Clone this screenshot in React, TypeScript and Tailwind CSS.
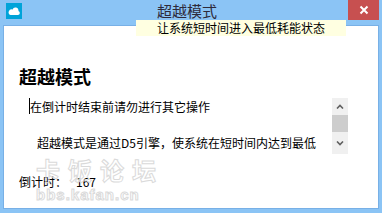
import React from 'react';

const AppIcon: React.FC = () => (
  <div className="w-4 h-4 bg-[#00a3d9] flex items-center justify-center">
    <svg width="12" height="8" viewBox="0 0 12 8">
      <path d="M2.5 8 H10 a2 2 0 0 0 0.4 -3.9 A3 3 0 0 0 4.6 2.6 A2.2 2.2 0 0 0 2.5 8 Z" fill="#ffffff" />
    </svg>
  </div>
);

const Chevron: React.FC<{ up?: boolean }> = ({ up }) => (
  <svg width="8" height="5" viewBox="0 0 8 5">
    <path d={up ? 'M1 4.5 L4 1.5 L7 4.5' : 'M1 0.5 L4 3.5 L7 0.5'} stroke="#606060" strokeWidth="1.6" fill="none" />
  </svg>
);

const App: React.FC = () => {
  const font = "font-['Microsoft_YaHei','Noto_Sans_CJK_SC',sans-serif]";

  return (
    <div className={`relative w-[382px] h-[213px] bg-[#8bc4f5] flex flex-col overflow-hidden ${font}`}>
      {/* title bar */}
      <div className="h-[25px] flex items-start shrink-0">
        <div className="mt-[3px] ml-[6px]">
          <AppIcon />
        </div>
        <div className="flex-1 text-center text-[15px] leading-[20px] text-[#2e2a3a] mt-[1px] pl-[4px]">超越模式</div>
        <button className="w-[31px] h-[20px] bg-[#c75050] flex items-center justify-center mr-[3px]">
          <svg width="10" height="10" viewBox="0 0 10 10">
            <path d="M1.5 1.5 L8.5 8.5 M8.5 1.5 L1.5 8.5" stroke="#ffffff" strokeWidth="2" />
          </svg>
        </button>
      </div>

      {/* client area */}
      <div className="flex-1 mx-[3px] mb-[4px] border border-[#78b0e6] bg-white flex flex-col pl-[15px] pt-[38px]">
        <h1 className="text-[18px] leading-[24px] font-bold text-black">超越模式</h1>

        <div className="mt-[10px] ml-[10px] mr-[30px] h-[56px] flex">
          <div className="flex-1 text-[12px] leading-[18px] text-black relative">
            <span className="absolute left-0 top-0 w-px h-[16px] bg-black" />
            <p className="pl-[1px]">在倒计时结束前请勿进行其它操作</p>
            <p className="h-[18px]" />
            <p className="pl-[8px] whitespace-nowrap overflow-hidden">超越模式是通过D5引擎，使系统在短时间内达到最低</p>
          </div>
          <div className="w-[16px] bg-[#f0f0f0] flex flex-col">
            <div className="h-[17px] flex items-center justify-center"><Chevron up /></div>
            <div className="h-[17px] bg-[#cdcdcd]" />
            <div className="flex-1 flex items-center justify-center"><Chevron /></div>
          </div>
        </div>

        <div className="mt-[19px] text-[12px] leading-[18px] text-black flex">
          <span>倒计时：</span>
          <span className="ml-[9px]">167</span>
        </div>
      </div>

      {/* tooltip */}
      <div className="absolute left-[136px] top-[20px] w-[210px] h-[16px] bg-[#ffffe1] text-[12px] leading-[16px] text-black text-center">
        让系统短时间进入最低耗能状态
      </div>

      {/* watermark */}
      <div className="absolute left-[36px] top-[155px] flex flex-col pointer-events-none">
        <div className="text-[24px] leading-[30px] tracking-[8px] font-bold text-transparent [-webkit-text-stroke:1px_#dadada]">卡饭论坛</div>
        <div className="font-['Liberation_Sans',sans-serif] text-[15px] leading-[16px] tracking-[1px] font-bold text-transparent [-webkit-text-stroke:1px_#dadada] mt-[2px]">bbs.kafan.cn</div>
      </div>
    </div>
  );
};

export default App;
